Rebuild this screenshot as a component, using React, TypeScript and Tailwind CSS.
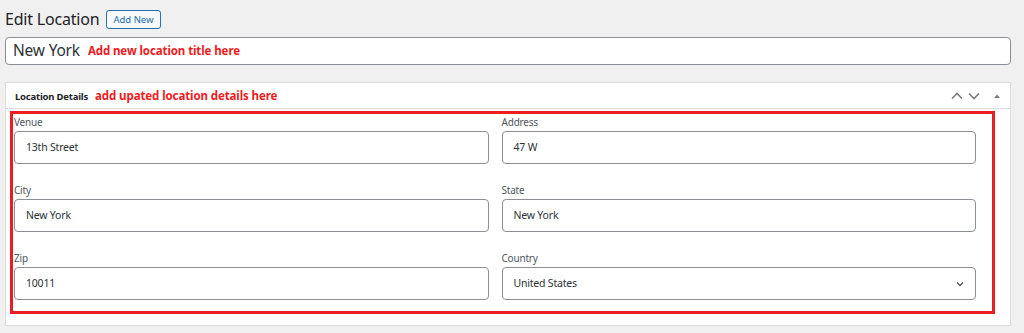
const FONT = "font-['Noto_Sans','Open_Sans',sans-serif]";

type FieldProps = { label: string; value: string; select?: boolean };

function Field({ label, value, select }: FieldProps) {
  return (
    <div className="flex flex-col">
      <label className="mb-[2px] text-[10px] leading-[14px] tracking-[-0.2px] text-[#50575e]">{label}</label>
      <div className="flex h-[33px] items-center justify-between rounded-[4px] border border-[#8c8f94] bg-white pl-[11px] pr-[10px] text-[10.5px] tracking-[-0.2px] text-[#2c3338]">
        <span>{value}</span>
        {select && (
          <svg width="10" height="10" viewBox="0 0 10 10" fill="none" stroke="#50575e" strokeWidth="1.3">
            <path d="M2 3.5 L5 6.5 L8 3.5" />
          </svg>
        )}
      </div>
    </div>
  );
}

export default function App() {
  return (
    <div className={`${FONT} min-h-[333px] bg-[#f0f0f1] pl-[5px] pr-[13px] pt-[7px]`}>
      <div className="flex items-center gap-[7px]">
        <h1 className="text-[16px] leading-[24px] font-normal tracking-[-0.2px] text-[#1d2327]">Edit Location</h1>
        <button className="h-[19px] rounded-[3px] border border-[#2271b1] bg-[#f6f7f7] px-[6px] text-[9.5px] leading-[17px] text-[#2271b1]">
          Add New
        </button>
      </div>

      <div className="mt-[6px] flex h-[28px] items-center rounded-[4px] border border-[#8c8f94] bg-white pl-[7px]">
        <span className="text-[15.5px] tracking-[-0.2px] text-[#2c3338]">New York</span>
        <span className="ml-[8px] text-[11.5px] font-bold tracking-[-0.1px] text-[#ec1c24]">Add new location title here</span>
      </div>

      <div className="mt-[17px] border border-[#dcdcde] bg-white">
        <div className="flex h-[26px] items-center justify-between border-b border-[#dcdcde] pl-[9px] pr-[6px]">
          <div className="flex items-baseline">
            <span className="text-[9.5px] font-bold tracking-[-0.2px] text-[#1d2327]">Location Details</span>
            <span className="ml-[7px] text-[11.5px] font-bold tracking-[-0.1px] text-[#ec1c24]">add upated location details here</span>
          </div>
          <div className="flex items-center gap-[3px]">
            <svg width="14" height="10" viewBox="0 0 14 10" fill="none" stroke="#787c82" strokeWidth="1.6">
              <path d="M2 7.5 L7 2.5 L12 7.5" />
            </svg>
            <svg width="14" height="10" viewBox="0 0 14 10" fill="none" stroke="#787c82" strokeWidth="1.6">
              <path d="M2 2.5 L7 7.5 L12 2.5" />
            </svg>
            <svg width="14" height="10" viewBox="0 0 14 10" className="ml-[6px]">
              <path d="M4 7 L7 3.5 L10 7 Z" fill="#787c82" />
            </svg>
          </div>
        </div>

        <div className="pb-[11px] pl-[4px] pr-[15px] pt-[2px]">
          <div className="border-[3px] border-[#ec1c24] pb-[11px] pl-[1px] pr-[16px] pt-[1px]">
            <div className="grid grid-cols-2 gap-x-[13px] gap-y-[19px]">
              <Field label="Venue" value="13th Street" />
              <Field label="Address" value="47 W" />
              <Field label="City" value="New York" />
              <Field label="State" value="New York" />
              <Field label="Zip" value="10011" />
              <Field label="Country" value="United States" select />
            </div>
          </div>
        </div>
      </div>
    </div>
  );
}
